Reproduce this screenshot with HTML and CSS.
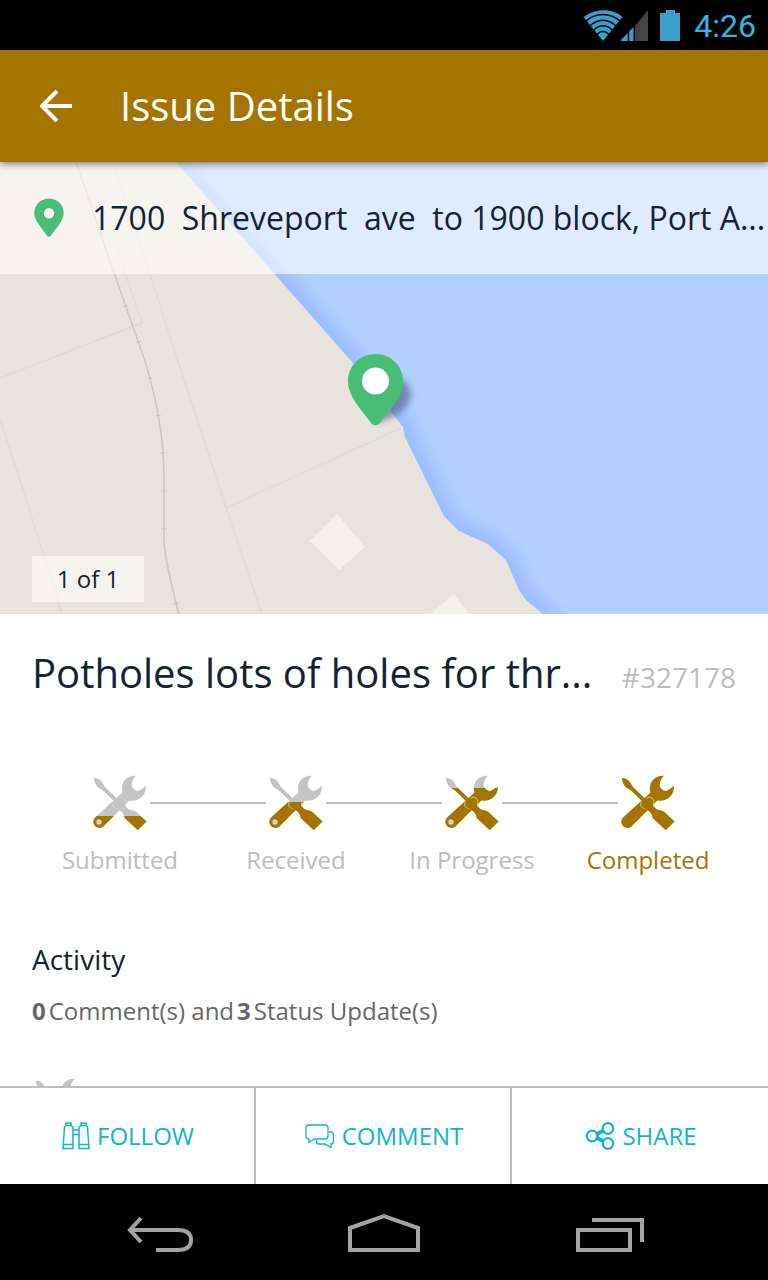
FILE: index.html
```html
<!DOCTYPE html>
<html lang="en">
<head>
  <meta charset="UTF-8" />
  <meta name="viewport" content="width=device-width, initial-scale=1" />
  <title>Issue Details</title>
  <link rel="stylesheet" href="styles.css">
</head>
<body>
  <!-- shared icons -->
  <svg class="defs" width="0" height="0" aria-hidden="true">
    <defs>
      <linearGradient id="level-1" gradientUnits="userSpaceOnUse" x1="0" y1="0" x2="0" y2="56">
        <stop offset="0.74" stop-color="#c3c4c6" /><stop offset="0.74" stop-color="#a37500" />
      </linearGradient>
      <linearGradient id="level-2" gradientUnits="userSpaceOnUse" x1="0" y1="0" x2="0" y2="56">
        <stop offset="0.49" stop-color="#c3c4c6" /><stop offset="0.49" stop-color="#a37500" />
      </linearGradient>
      <linearGradient id="level-3" gradientUnits="userSpaceOnUse" x1="0" y1="0" x2="0" y2="56">
        <stop offset="0.24" stop-color="#c3c4c6" /><stop offset="0.24" stop-color="#a37500" />
      </linearGradient>
      <symbol id="tools" viewBox="0 0 54 56">
        <path d="M43 0.7C36 0 30 4.500 29 11C28.600 13.500 28.800 15.500 29.400 17.500L2.300 42.300C-0.500 45 -0.300 49 2.300 51.300C4.500 53.500 8.200 53.500 10.400 51.500L36.500 25.400C44 27 50.500 22.500 52.400 16C53 14 53.100 12.500 52.500 10.800C50.500 13 47.500 15.500 44.500 16C41.500 15 39.500 13.500 38.700 11C38.300 7 40.500 3 43 0.700Z" />
        <path stroke="#ead9ae" stroke-width="0.800" d="M20.500 26.500C19 29 19.500 32 22 33C25 33 29 35.500 30 38.500M26 23C29 21 32 23 33 26C32.500 28 32.500 29 34 31" fill="none" />
        <path d="M1 3C4 2.500 7 4.500 9 7C10.500 9 10.500 10.500 12.500 12.500L25.700 25.300C29 25.500 31 27 31.500 29.500C33.500 33 36 35 40 35.500C42 35.500 43 36.500 44 37.500L53.700 46.500L44.700 55.200L31.500 43C31 40 30.500 38.500 29 37C26 34.500 22 33.500 22.300 29.500L22.800 28L9.500 15C7 13.700 4.500 12.500 3 10C1.700 7.500 1 5.500 1 3Z" />
      </symbol>
    </defs>
  </svg>

  <div class="status-bar">
    <svg class="status-icons" width="104" height="34" viewBox="0 0 104 34" aria-hidden="true">
      <g fill="#3a9fc9">
        <path d="M0.500 8C12 -1 30 -1 39.500 8L20 32Z" />
        <path d="M38 32V31L50.500 18V32Z" />
        <path d="M77 4H83V1H92V4H97V32H77Z" />
      </g>
      <path fill="#444" d="M52 32V17L65 1V32Z" />
      <path stroke="#000" stroke-width="1.400" fill="none" d="M45.500 19V33M2 13C12 3 28 3 38 13M6 18C14 9 26 9 34 18M10 22C16 15 24 15 30 22M13 27C17 21 23 21 27 27" />
    </svg>
    <span class="clock">4:26</span>
  </div>

  <header class="app-bar">
    <button class="back-btn" type="button" aria-label="Back">
      <svg width="32" height="32" viewBox="0 0 32 32" aria-hidden="true">
        <path d="M32 16H3M17 1L2 16L17 31" fill="none" stroke="#fff" stroke-width="4" />
      </svg>
    </button>
    <h1>Issue Details</h1>
  </header>

  <main class="content">
    <section class="map">
      <svg class="map-canvas" viewBox="0 -1 768 452" preserveAspectRatio="xMidYMid slice" aria-hidden="true">
        <defs>
          <clipPath id="water-clip">
            <path d="M176 -1L353 200L403 264L405 274L444 353L459 368L488 381L506 397L519 427L526 437L544 452H768V-1Z" />
          </clipPath>
          <filter id="soft" x="-20%" y="-20%" width="140%" height="140%"><feGaussianBlur stdDeviation="8" /></filter>
          <filter id="pin-blur" x="-50%" y="-50%" width="200%" height="200%"><feGaussianBlur stdDeviation="3" /></filter>
        </defs>
        <rect y="-1" width="768" height="453" fill="#e8e4dd" />
        <g clip-path="url(#water-clip)">
          <rect y="-1" width="768" height="453" fill="#b0d0ff" />
          <path filter="url(#soft)" fill="none" stroke="#98b9ff" stroke-width="20" d="M165 -14L353 200L403 264L405 274L444 353L459 368L488 381L506 397L519 427L526 437L560 466" />
        </g>
        <path fill="none" stroke="#dfdbd5" stroke-width="1.500" d="M87 -1L142 160L0 215M112 -1L150 112L226 345L262 452M0 255L54 424L62 452M226 345L401 265" />
        <path fill="none" stroke="#c9c6c1" stroke-width="1.500" d="M76 -1L119 124L145 198Q164 260 164 315V380Q166 402 179 452" />
        <path fill="none" stroke="#c9c6c1" stroke-width="5" stroke-dasharray="1 37" d="M76 -1L119 124L145 198Q164 260 164 315V380Q166 402 179 452" />
        <path fill="#f3f3ec" d="M337 351L365 384L339 407L310 378ZM454 431L470 452H429Z" />
        <path filter="url(#pin-blur)" fill="#465078" opacity="0.550" d="M375 261L388 214Q405 212 411 228Q412 245 392 254Z" />
        <path fill="#49bd76" d="M375.500 191C360 191 348 203 348 218C348 234 362 247 371 260C374 263 377 263 380 260C389 247 403 234 403 218C403 203 391 191 375.500 191Z" />
        <circle cx="375.500" cy="218" r="13.500" fill="#fff" />
      </svg>
      <div class="address">
        <svg class="address-pin" width="30" height="40" viewBox="0 0 30 40" aria-hidden="true">
          <path fill="#49bd76" fill-rule="evenodd" d="M15 0.500C6.500 0.500 0.300 7 0.300 15C0.300 23 8 30 13 37.500C14.300 39.200 15.700 39.200 17 37.500C22 30 29.700 23 29.700 15C29.700 7 23.500 0.500 15 0.500ZM15 10A5.200 5.200 0 1 1 15 20.400A5.200 5.200 0 1 1 15 10Z" />
        </svg>
        <span class="address-text">1700  Shreveport  ave  to 1900 block, Port A...</span>
      </div>
      <span class="counter">1 of 1</span>
    </section>

    <section class="summary">
      <h2>Potholes lots of holes for thr...</h2>
      <span class="issue-id">#327178</span>
    </section>

    <ol class="steps">
      <li class="step">
        <div class="track">
          <svg class="tools" fill="url(#level-1)" aria-hidden="true"><use href="#tools" /><circle cx="6" cy="47" r="2.700" fill="#d6cfcc" /></svg>
        </div>
        <span>Submitted</span>
      </li>
      <li class="step">
        <div class="track">
          <svg class="tools" fill="url(#level-2)" aria-hidden="true"><use href="#tools" /><circle cx="6" cy="47" r="2.700" fill="#d6cfcc" /></svg>
        </div>
        <span>Received</span>
      </li>
      <li class="step">
        <div class="track">
          <svg class="tools" fill="url(#level-3)" aria-hidden="true"><use href="#tools" /><circle cx="6" cy="47" r="2.700" fill="#d6cfcc" /></svg>
        </div>
        <span>In Progress</span>
      </li>
      <li class="step current">
        <div class="track">
          <svg class="tools" fill="#a37500" aria-hidden="true"><use href="#tools" /></svg>
        </div>
        <span>Completed</span>
      </li>
    </ol>

    <section class="activity">
      <h3>Activity</h3>
      <p><b>0</b><span>Comment(s) and</span><b>3</b><span>Status Update(s)</span></p>
      <div class="activity-item">
        <svg class="tools-small" viewBox="0 0 54 56" fill="#c3c4c6" aria-hidden="true"><use href="#tools" width="54" height="56" /></svg>
      </div>
    </section>
  </main>

  <footer class="actions">
    <button type="button">
      <svg width="28" height="28" viewBox="0 0 28 28" fill="none" stroke="#10b5c6" stroke-width="1.500" aria-hidden="true">
        <path d="M1 26.500L2.500 5L4 3.500V1H9V3.500L11 5V26.500ZM27 26.500L25.500 5L24 3.500V1H19V3.500L17 5V26.500ZM1 22.500H11M17 22.500H27M4 3.500H9M19 3.500H24M11 8H17M11 12.500H17" />
      </svg>
      FOLLOW
    </button>
    <button type="button">
      <svg width="30" height="28" viewBox="0 0 30 28" fill="none" stroke="#10b5c6" stroke-width="1.300" aria-hidden="true">
        <path d="M4 17Q1 17 1 14V6Q1 3 4 3H20Q23 3 23 6V14Q23 17 20 17H9L4 20.500V17ZM24 10H26Q28.500 10 28.500 13V19Q28.500 22 26 22V25.500L20 22H14Q11.500 22 11.500 19V18" />
      </svg>
      COMMENT
    </button>
    <button type="button">
      <svg width="30" height="28" viewBox="0 0 30 28" fill="none" stroke="#10b5c6" stroke-width="2.200" aria-hidden="true">
        <path stroke-width="4" d="M12 12L18 9M12 16L18 19" />
        <circle cx="7" cy="14" r="5.300" /><circle cx="23" cy="6.500" r="5.300" /><circle cx="23" cy="21.500" r="5.300" />
      </svg>
      SHARE
    </button>
  </footer>

  <nav class="system-nav">
    <button type="button" aria-label="Back">
      <svg width="72" height="40" viewBox="0 0 72 40" aria-hidden="true">
        <path d="M8 18H54Q67 18 67 28T54 38H32" fill="none" stroke="#a3a3a3" stroke-width="4" />
        <path d="M17 6L6 18L17 30" fill="none" stroke="#a3a3a3" stroke-width="4" />
      </svg>
    </button>
    <button type="button" aria-label="Home">
      <svg width="72" height="40" viewBox="0 0 72 40" aria-hidden="true">
        <path d="M2 16L36 4L70 16V38H2Z" fill="none" stroke="#a3a3a3" stroke-width="4" />
      </svg>
    </button>
    <button type="button" aria-label="Recent apps">
      <svg width="72" height="40" viewBox="0 0 72 40" aria-hidden="true">
        <path d="M6 18H58V38H6ZM20 8H70V30" fill="none" stroke="#a3a3a3" stroke-width="4" />
      </svg>
    </button>
  </nav>
</body>
</html>
```
FILE: styles.css
```css
* {
  box-sizing: border-box;
}
body {
  margin: 0;
  height: 100vh;
  display: flex;
  flex-direction: column;
  font-family: "Open Sans", "Noto Sans", sans-serif;
  color: #152234;
  background-color: #fff;
}
h1, h2, h3, p, ol {
  margin: 0;
  padding: 0;
  font-weight: 400;
}
button {
  font: inherit;
  border: 0;
  padding: 0;
  background: none;
  cursor: pointer;
}
svg {
  display: block;
  flex: none;
}
.defs {
  position: absolute;
}

/* status bar */
.status-bar {
  flex: none;
  height: 50px;
  padding: 2px 12px 0;
  display: flex;
  align-items: center;
  justify-content: flex-end;
  gap: 7px;
  background-color: #000;
}
.clock {
  font-family: Roboto, sans-serif;
  font-size: 32px;
  color: #33b5e5;
}

/* app bar */
.app-bar {
  flex: none;
  height: 112px;
  padding: 0 40px;
  display: flex;
  align-items: center;
  gap: 48px;
  color: #fff;
  background-color: #a37500;
  box-shadow: 0 1px 8px rgba(0, 0, 0, 0.6);
  z-index: 1;
}
.app-bar h1 {
  padding-bottom: 2px;
  font-size: 40px;
}

.content {
  flex: 1;
  min-height: 0;
  overflow: hidden;
}

/* map */
.map {
  position: relative;
  height: 452px;
}
.map-canvas {
  width: 100%;
  height: 100%;
}
.address {
  position: absolute;
  top: 0;
  left: 0;
  right: 0;
  height: 112px;
  padding: 0 8px 0 34px;
  display: flex;
  align-items: center;
  gap: 28px;
  background-color: rgba(255, 255, 255, 0.6);
}
.address-text {
  padding-bottom: 2px;
  font-size: 32px;
  white-space: pre;
}
.counter {
  position: absolute;
  left: 32px;
  bottom: 12px;
  width: 112px;
  line-height: 46px;
  font-size: 24px;
  text-align: center;
  background-color: rgba(255, 255, 255, 0.6);
}

/* title */
.summary {
  padding: 31px 32px 0;
  display: flex;
  align-items: baseline;
  justify-content: space-between;
}
.summary h2 {
  font-size: 40px;
  line-height: 56px;
}
.issue-id {
  font-size: 28px;
  color: #bdbdbd;
}

/* progress steps */
.steps {
  padding: 74px 32px 0;
  display: grid;
  grid-template-columns: repeat(4, 1fr);
  list-style: none;
}
.step {
  text-align: center;
  font-size: 24px;
  line-height: 32px;
  color: #bdbdbd;
}
.step.current {
  color: #a37500;
}
.track {
  display: flex;
  align-items: center;
  gap: 3px;
  margin-bottom: 13px;
}
.track::before,
.track::after {
  content: "";
  flex: 1;
  height: 2px;
  background-color: #bdbdbd;
}
.step:first-child .track::before,
.step:last-child .track::after {
  background: none;
}
.tools {
  width: 54px;
  height: 56px;
}

/* activity */
.activity {
  padding: 63px 32px 0;
}
.activity h3 {
  font-size: 28px;
  line-height: 40px;
}
.activity p {
  display: flex;
  gap: 3px;
  margin-top: 16px;
  font-size: 24px;
  line-height: 32px;
  color: #666;
}
.activity-item {
  margin-top: 51px;
  padding-left: 3px;
}
.tools-small {
  width: 50px;
  height: 52px;
}

/* bottom actions */
.actions {
  flex: none;
  height: 98px;
  display: grid;
  grid-template-columns: repeat(3, 1fr);
  border-top: 2px solid #bdbdbd;
  background-color: #fff;
  z-index: 1;
}
.actions button {
  padding: 0 0 2px 2px;
  display: flex;
  align-items: center;
  justify-content: center;
  gap: 7px;
  font-size: 24px;
  color: #10b5c6;
}
.actions svg {
  margin-top: 2px;
}
.actions button:not(:last-child) {
  border-right: 2px solid #bdbdbd;
}

/* system navigation */
.system-nav {
  flex: none;
  height: 96px;
  padding: 0 48px;
  display: grid;
  grid-template-columns: repeat(3, 1fr);
  justify-items: center;
  align-items: center;
  background-color: #000;
}
```
